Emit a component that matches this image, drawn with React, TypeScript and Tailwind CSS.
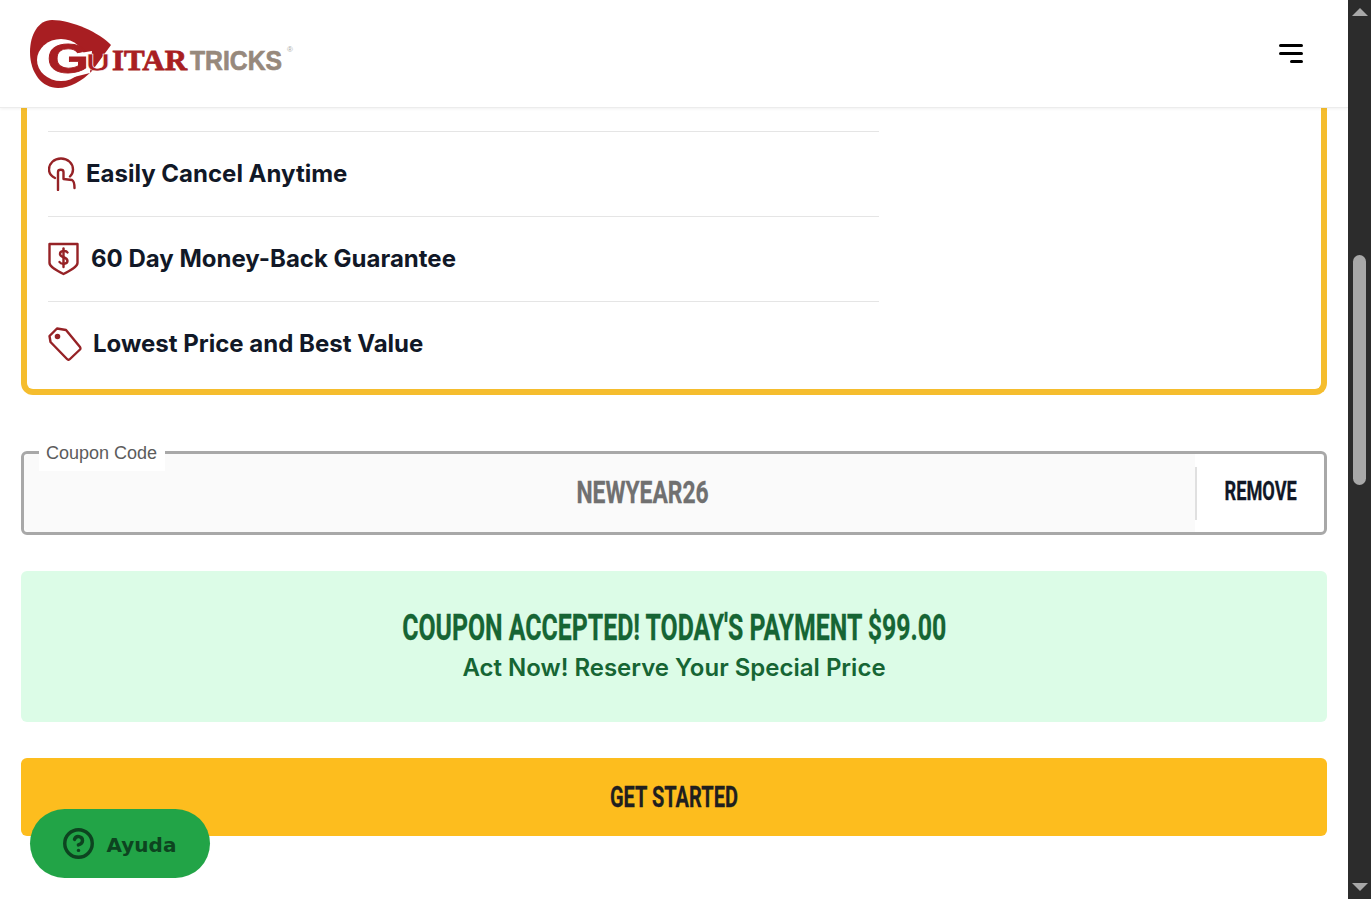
import { CircleHelp } from "lucide-react";

const condensed = "font-['Roboto','Liberation_Sans',sans-serif] [-webkit-text-stroke:0.3px]";

function Logo() {
  return (
    <svg width="300" height="72" viewBox="0 0 300 72" className="block">
      {/* pick */}
      <path
        d="M22 1 C8 1 0 16 0 33 C0 54 12 69 28 69 C40 69 52 62 62 52 L81 26 C70 14 42 1 22 1 Z"
        fill="#a81e22"
      />
      <ellipse cx="31" cy="41" ry="21" rx="24" fill="#fff" />
      <path d="M50 34 L62 32 L60 54 L44 58 Z" fill="#fff" />
      <text x="17" y="54" fontFamily="'Liberation Sans', sans-serif" fontWeight="700" fontSize="43" fill="#a81e22" stroke="#a81e22" strokeWidth="0.8" textLength="42" lengthAdjust="spacingAndGlyphs">G</text>
      <text x="56" y="52" fontFamily="'Liberation Sans', sans-serif" fontWeight="700" fontSize="24" fill="#a81e22" stroke="#fff" strokeWidth="0.5" textLength="24" lengthAdjust="spacingAndGlyphs">U</text>
      <text x="82" y="51" fontFamily="'Liberation Serif', serif" fontWeight="700" fontSize="30" fill="#a81e22" stroke="#a81e22" strokeWidth="0.8" textLength="75" lengthAdjust="spacingAndGlyphs">ITAR</text>
      <text x="160" y="51" fontFamily="'Liberation Sans', sans-serif" fontWeight="700" fontSize="28" fill="#97897c" stroke="#97897c" strokeWidth="0.7" textLength="92" lengthAdjust="spacingAndGlyphs">TRICKS</text>
      <text x="257" y="33" fontFamily="'Liberation Sans', sans-serif" fontSize="8" fill="#aaa">®</text>
    </svg>
  );
}

function HandIcon() {
  return (
    <svg width="28" height="34" viewBox="0 0 28 34" fill="none" stroke="#962226" strokeWidth="2.4" strokeLinecap="round" strokeLinejoin="round">
      <path d="M7 21 C3 19 1 16 1 12.5 C1 6.5 6 1.5 13 1.5 C20 1.5 25 6.5 25 12.5 C25 15 24 17.5 22 19.5" />
      <path d="M10 33 V15 C10 12 15.5 12 15.5 15 V22 L24 23 C26 24 26.5 26 26.5 31" />
    </svg>
  );
}

function ShieldIcon() {
  return (
    <svg width="32" height="34" viewBox="0 0 32 34" fill="none" stroke="#962226" strokeWidth="2.4" strokeLinecap="round" strokeLinejoin="round">
      <path d="M1.5 2 H29.5 V21 C29.5 25 21.5 29 15.5 32 C9.5 29 1.5 25 1.5 21 Z" />
      <path d="M19.5 10.5 C18.5 8.5 12 8 12 12 C12 16 19.5 14.5 19.5 19 C19.5 22.5 13 22.5 11.5 20" />
      <path d="M15.5 6.5 V25" />
    </svg>
  );
}

function TagIcon() {
  return (
    <svg width="34" height="34" viewBox="0 0 34 34" fill="none" stroke="#962226" strokeWidth="2.4" strokeLinecap="round" strokeLinejoin="round">
      <path d="M1.5 9 L9 1.5 L18 3 L32 20 C32.5 21 32.5 22 32 22.5 L22 32 C21 33 20 33 19 32 L2.5 15 Z" />
      <circle cx="9.5" cy="9.5" r="1.6" fill="#962226" />
    </svg>
  );
}

const benefits = [
  { label: "Easily Cancel Anytime", icon: <HandIcon />, gap: "gap-[10px]" },
  { label: "60 Day Money-Back Guarantee", icon: <ShieldIcon />, gap: "gap-[11px]" },
  { label: "Lowest Price and Best Value", icon: <TagIcon />, gap: "gap-[11px]" },
];

export default function App() {
  return (
    <div className="relative flex h-[899px] w-[1371px] overflow-hidden bg-white font-['Inter',sans-serif]">
      <div className="flex w-[1348px] flex-col">
        {/* Header */}
        <header className="relative z-10 flex h-[108px] shrink-0 items-center justify-between border-b border-[#ececec] bg-white pl-[30px] pr-[45px] shadow-[0_1px_3px_rgba(0,0,0,0.06)]">
          <div className="mt-[2px]">
            <Logo />
          </div>
          <button className="flex w-6 flex-col items-end gap-[5px]">
            <span className="h-[3px] w-6 rounded-sm bg-black" />
            <span className="h-[3px] w-6 rounded-sm bg-black" />
            <span className="h-[3px] w-[13px] rounded-sm bg-black" />
          </button>
        </header>

        <main className="flex flex-col px-[21px]">
          {/* Benefits card, scrolled under the header */}
          <section className="h-[287px] w-[1306px] rounded-b-xl border-x-[6px] border-b-[6px] border-[#f5bd2e] bg-white pl-[21px] pt-[23px]">
            <ul className="w-[831px]">
              {benefits.map((b) => (
                <li key={b.label} className={`flex h-[85px] items-center ${b.gap} border-t border-[#e5e5e5]`}>
                  {b.icon}
                  <span className="text-[24px] font-bold text-[#111827]">{b.label}</span>
                </li>
              ))}
            </ul>
          </section>

          {/* Coupon */}
          <div className="relative mt-[56px] flex h-[84px] items-center rounded-md border-[3px] border-[#a8a8a8] bg-white">
            <span className="absolute left-[15px] top-[-13px] h-[30px] bg-white pl-[7px] pr-[8px] font-['Liberation_Sans',sans-serif] text-[18px] leading-[24px] text-[#5c5c5c]">
              Coupon Code
            </span>
            <div className="flex h-full flex-1 items-center justify-center rounded-l-md bg-[#fafafa] pb-[3px] pl-[66px]">
              <span className={`inline-block scale-x-[0.715] ${condensed} text-[32px] font-bold text-[#707070]`}>NEWYEAR26</span>
            </div>
            <div className="h-[53px] w-[2px] bg-[#e0e0e0]" />
            <div className={`flex h-full w-[127px] items-center justify-center pb-[3px] ${condensed} text-[26px] font-bold text-[#111827]`}>
              <span className="inline-block scale-x-[0.7]">REMOVE</span>
            </div>
          </div>

          {/* Coupon accepted */}
          <div className="mt-[36px] flex h-[151px] flex-col items-center justify-center rounded-md bg-[#dcfce7] pb-[2px] text-[#166534]">
            <div className={`scale-x-[0.69] whitespace-nowrap ${condensed} text-[36px] font-bold leading-[44px]`}>COUPON ACCEPTED! TODAY'S PAYMENT $99.00</div>
            <div className="text-[24px] font-semibold leading-[36px]">Act Now! Reserve Your Special Price</div>
          </div>

          <button className={`mt-[36px] flex h-[78px] items-center justify-center rounded-md bg-[#fdbd1e] pb-[2px] ${condensed} text-[30px] font-bold text-[#1f1f1f]`}>
            <span className="inline-block scale-x-[0.667]">GET STARTED</span>
          </button>
        </main>
      </div>

      {/* Scrollbar */}
      <aside className="flex h-full w-[23px] flex-col items-center bg-[#2c2c2c]">
        <div className="mt-2 h-0 w-0 border-x-[8px] border-b-[8px] border-x-transparent border-b-[#a8a8a8]" />
        <div className="mt-[239px] h-[230px] w-[13px] rounded-full bg-[#a8a8a8]" />
        <div className="mt-auto mb-2 h-0 w-0 border-x-[8px] border-t-[8px] border-x-transparent border-t-[#a8a8a8]" />
      </aside>

      {/* Help button */}
      <button className="absolute left-[30px] top-[809px] flex h-[69px] w-[180px] items-center justify-center gap-[12px] rounded-full bg-[#22a447] pr-[2px] font-['DejaVu_Sans',sans-serif] text-[20px] font-bold text-[#0d4420]">
        <CircleHelp className="h-[33px] w-[33px]" strokeWidth={2.5} />
        <span className="mt-[3px]">Ayuda</span>
      </button>
    </div>
  );
}
